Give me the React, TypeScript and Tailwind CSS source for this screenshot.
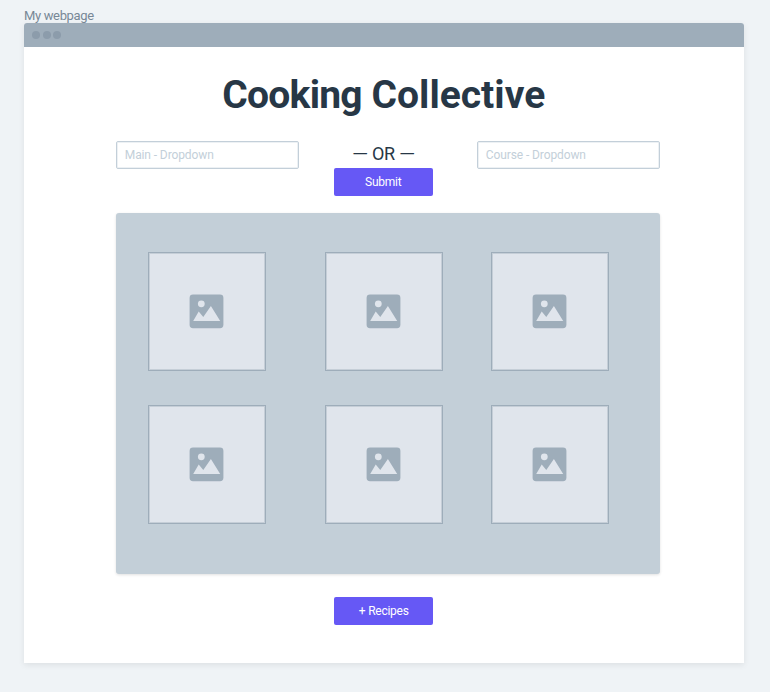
import React from "react";

function ImageGlyph() {
  return (
    <svg width="35" height="35" viewBox="0 0 35 35" className="mb-px mr-px block">
      <rect x="0.6" y="0.4" width="33.8" height="33.8" rx="3.4" fill="#9eadba" />
      <circle cx="12.3" cy="9.8" r="3.4" fill="#e0e5ec" />
      <path d="M4.2 27 L9.7 17.6 L14.3 23.1 L21.9 12.1 L31.2 27 Z" fill="#e0e5ec" />
    </svg>
  );
}

function ImageCard() {
  return (
    <div className="flex h-[119px] w-[118px] items-center justify-center border border-[#9eadba] bg-[#e0e5ec] shadow-[inset_0_0_0_1px_rgba(158,173,186,0.4)]">
      <ImageGlyph />
    </div>
  );
}

function Dropdown({ children }: { children: React.ReactNode }) {
  return (
    <div className="flex h-7 w-[183px] items-center rounded-[2px] border border-[#c3cfd9] bg-white pl-2 text-[12px] tracking-[-0.1px] text-[#c3cfd9] shadow-[inset_0_0_0_1px_rgba(195,207,217,0.3)]">
      {children}
    </div>
  );
}

function Button({ children }: { children: React.ReactNode }) {
  return (
    <button className="flex h-7 w-[99px] items-center justify-center rounded-[2px] bg-[#6658f5] text-[12px] tracking-[-0.25px] text-white">
      {children}
    </button>
  );
}

export default function App() {
  return (
    <div className="h-[692px] w-[770px] bg-[#eff3f6] pl-6 pt-2 font-['Roboto','Liberation_Sans',sans-serif]">
      <p className="h-[15px] text-[13px] leading-4 tracking-[-0.35px] text-[#788896]">My webpage</p>
      <div className="h-[640px] w-[719.5px] rounded-t-[3px] bg-white shadow-[0_2px_6px_rgba(0,0,0,0.08)]">
        <header className="flex h-6 items-center gap-[2.6px] rounded-t-[3px] bg-[#9eadba] pl-2">
          <span className="size-2 rounded-full bg-[#8c9cab]" />
          <span className="size-2 rounded-full bg-[#8c9cab]" />
          <span className="size-2 rounded-full bg-[#8c9cab]" />
        </header>
        <main className="flex flex-col items-center pt-[25px]">
          <h1 className="h-[45px] whitespace-nowrap text-[39px] font-bold leading-[46px] text-[#273746]">
            <span className="tracking-[-0.75px]">Cooking</span> Collective
          </h1>
          <div className="mt-6 flex h-[55px] w-[544px] translate-x-[4px] justify-between">
            <Dropdown>Main - Dropdown</Dropdown>
            <div className="-ml-[9px] flex flex-col items-center">
              <div className="flex h-[27px] gap-[5px] whitespace-nowrap text-[18px] leading-[26px] text-[#273746]">
                <span className="scale-x-[1.15]">—</span>
                <span className="tracking-[-0.4px]">OR</span>
                <span className="scale-x-[1.15]">—</span>
              </div>
              <Button>Submit</Button>
            </div>
            <Dropdown>Course - Dropdown</Dropdown>
          </div>
          <section className="mt-[17px] h-[361px] w-[544.5px] translate-x-[4px] rounded-[3px] bg-[#c3cfd8] pl-[32.5px] pt-[39px] shadow-[0_1px_3px_rgba(0,0,0,0.12)]">
            <div className="grid grid-cols-[177px_166px_118px] gap-y-[34px]">
              {[0, 1, 2, 3, 4, 5].map((id) => (
                <ImageCard key={id} />
              ))}
            </div>
          </section>
          <div className="mt-[23px]">
            <Button>+ Recipes</Button>
          </div>
        </main>
      </div>
    </div>
  );
}
